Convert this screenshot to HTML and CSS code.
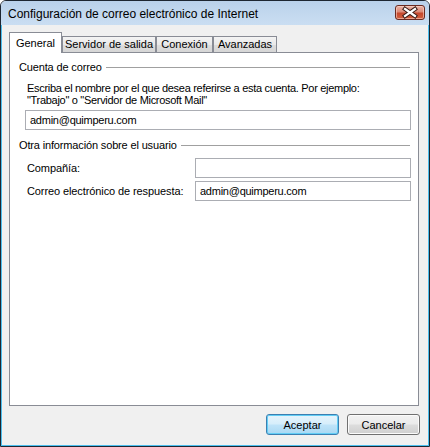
FILE: index.html
```html
<!DOCTYPE html>
<html lang="es">
<head>
<meta charset="utf-8">
<title>Configuración de correo electrónico de Internet</title>
<link rel="stylesheet" href="styles.css">
</head>
<body>
<div class="window">
  <div class="titlebar">
    <span class="title">Configuración de correo electrónico de Internet</span>
    <div class="close">
      <svg width="28" height="13" viewBox="0 0 28 13">
        <path d="M9 3 L19 10 M19 3 L9 10" stroke="#3a1c16" stroke-width="4.2" stroke-linecap="square" fill="none"/>
        <path d="M9 3 L19 10 M19 3 L9 10" stroke="#ffffff" stroke-width="2.2" stroke-linecap="square" fill="none"/>
      </svg>
    </div>
  </div>
  <div class="client">
    <div class="tabs">
      <div class="tab tab-general active">General</div>
      <div class="tab tab-servidor">Servidor de salida</div>
      <div class="tab tab-conexion">Conexión</div>
      <div class="tab tab-avanzadas">Avanzadas</div>
    </div>
    <div class="panel">
      <section class="group">
        <div class="group-head"><span class="group-title">Cuenta de correo</span><span class="rule"></span></div>
        <div class="group-body">
          <p class="desc">Escriba el nombre por el que desea referirse a esta cuenta. Por ejemplo:<br>"Trabajo" o "Servidor de Microsoft Mail"</p>
          <div class="input">admin@quimperu.com</div>
        </div>
      </section>
      <section class="group group-user">
        <div class="group-head"><span class="group-title">Otra información sobre el usuario</span><span class="rule"></span></div>
        <div class="form-grid">
          <label class="label">Compañía:</label>
          <div class="input"></div>
          <label class="label">Correo electrónico de respuesta:</label>
          <div class="input">admin@quimperu.com</div>
        </div>
      </section>
    </div>
    <div class="actions">
      <button class="btn btn-default">Aceptar</button>
      <button class="btn">Cancelar</button>
    </div>
  </div>
</div>
</body>
</html>
```

FILE: styles.css
```css
html, body {
  margin: 0;
  padding: 0;
}
body {
  width: 430px;
  height: 447px;
  background: #ffffff;
  font-family: "Liberation Sans", Arial, sans-serif;
  font-size: 11px;
  color: #000;
}
.window {
  box-sizing: border-box;
  width: 430px;
  height: 447px;
  border: 1px solid #1d2631;
  border-radius: 6px 6px 0 0;
  background: #f0f0f0;
  display: flex;
  flex-direction: column;
  overflow: hidden;
}
.titlebar {
  height: 24px;
  flex: none;
  display: flex;
  align-items: flex-start;
  padding-left: 7px;
  background: linear-gradient(#b9d1ea, #c4d9ef 60%, #cadef2);
}
.title {
  font-size: 12px;
  line-height: 14px;
  margin-top: 6px;
  color: #000;
}
.close {
  margin-left: auto;
  margin-right: 4px;
  margin-top: 4px;
  width: 30px;
  height: 15px;
  box-sizing: border-box;
  border: 1px solid #6b2a20;
  border-radius: 3px;
  background: linear-gradient(#eab3a5, #dc8a77 45%, #c5482d 55%, #d2603f);
  box-shadow: inset 0 0 0 1px rgba(255, 220, 210, 0.55);
  display: flex;
  align-items: center;
  justify-content: center;
}
.close svg {
  display: block;
}
.client {
  flex: 1;
  display: flex;
  flex-direction: column;
  border: 1px solid #4cbfee;
  border-top: none;
  padding: 7px 9px 0 7px;
}
.tabs {
  display: flex;
  align-items: flex-end;
  height: 20px;
}
.tab {
  box-sizing: border-box;
  height: 16px;
  border: 1px solid #898c95;
  border-bottom: none;
  background: linear-gradient(#f4f4f4, #e9e9e9 50%, #dddddd 52%, #d6d6d6);
  line-height: 15px;
  text-align: center;
  white-space: nowrap;
}
.tab.active {
  height: 21px;
  margin-bottom: -1px;
  z-index: 1;
  background: #ffffff;
  padding-top: 3px;
}
.tab-general { width: 53px; }
.tab-servidor { width: 94px; }
.tab-conexion { width: 57px; }
.tab-avanzadas { width: 64px; }
.panel {
  box-sizing: border-box;
  height: 354px;
  border: 1px solid #898c95;
  background: #ffffff;
  padding: 8px 7px 0 9px;
}
.group-head {
  display: flex;
  align-items: center;
  height: 13px;
  line-height: 13px;
}
.group-title {
  letter-spacing: -0.15px;
}
.rule {
  flex: 1;
  height: 0;
  border-top: 1px solid #a0a0a0;
  margin-left: 4px;
  margin-right: 1px;
}
.group-body {
  margin-left: 6px;
}
.desc {
  margin: 8px 0 0 2px;
  line-height: 12px;
  letter-spacing: -0.3px;
}
.input {
  box-sizing: border-box;
  height: 20px;
  border: 1px solid #abadb3;
  background: #fff;
  padding-left: 4px;
  line-height: 18px;
  letter-spacing: -0.25px;
}
.group-body .input {
  margin-top: 4px;
}
.group-user {
  margin-top: 9px;
}
.form-grid {
  display: grid;
  grid-template-columns: 170px 216px;
  grid-auto-rows: 20px;
  row-gap: 3px;
  margin: 6px 0 0 6px;
}
.label {
  padding-left: 2px;
  line-height: 20px;
  letter-spacing: -0.1px;
}
.actions {
  display: flex;
  justify-content: flex-end;
  gap: 8px;
  margin-top: 8px;
  margin-right: -1px;
}
.btn {
  box-sizing: border-box;
  width: 73px;
  height: 21px;
  padding: 0;
  border: 1px solid #707070;
  border-radius: 3px;
  background: linear-gradient(#f2f2f2, #ebebeb 48%, #dddddd 52%, #cfcfcf);
  box-shadow: inset 0 0 0 1px #fbfbfb;
  font-family: "Liberation Sans", Arial, sans-serif;
  font-size: 11px;
  color: #000;
}
.btn-default {
  border-color: #3c7fb1;
  background: linear-gradient(#e6f4fc, #d6eefb 48%, #bfe4f9 52%, #a9d8f3);
  box-shadow: inset 0 0 0 1px #62cdf5;
}
```
